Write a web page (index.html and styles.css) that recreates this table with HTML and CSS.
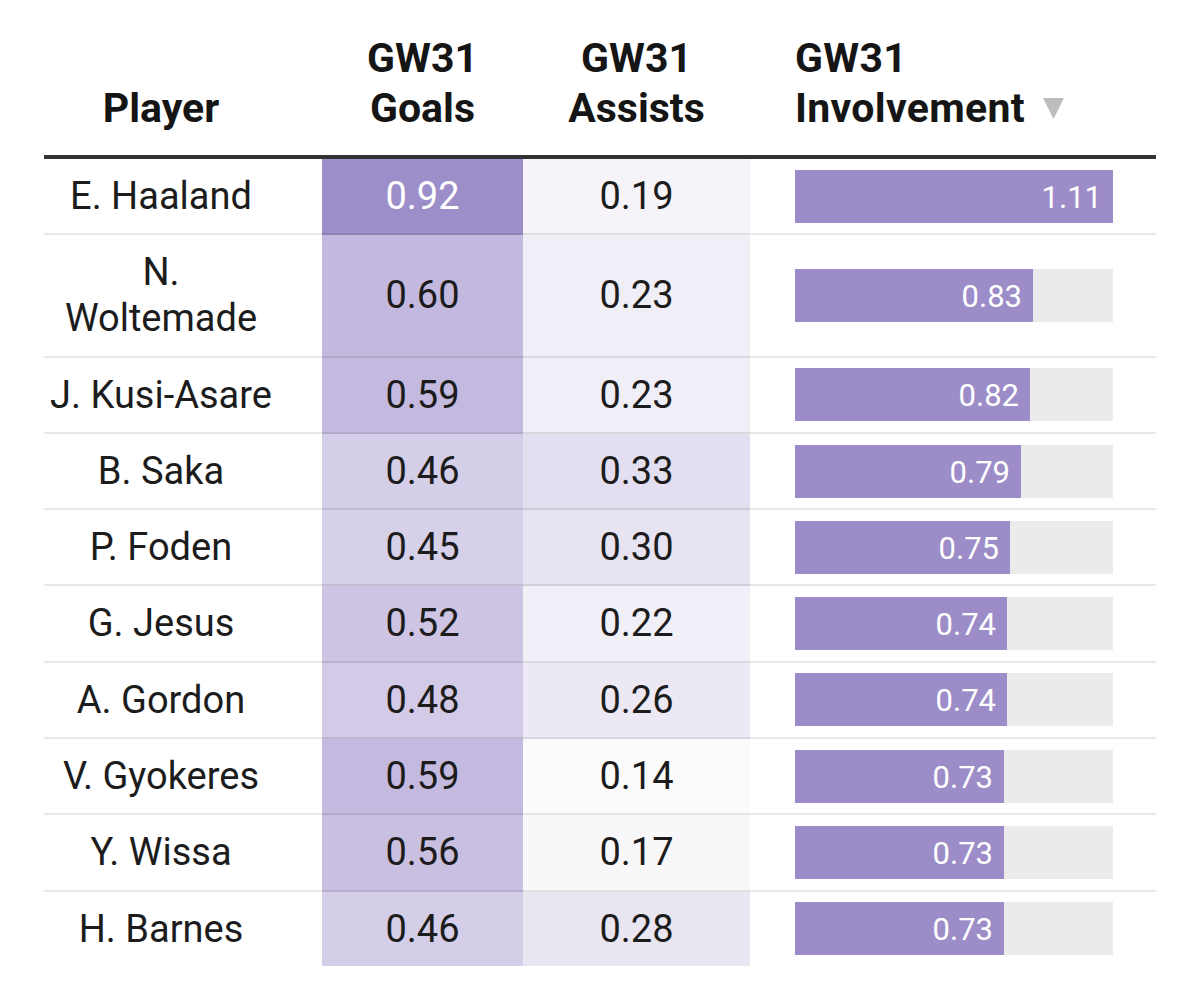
FILE: index.html
```html
<!DOCTYPE html>
<html lang="en">
<head>
<meta charset="utf-8">
<title>GW31 Involvement</title>
<link rel="stylesheet" href="styles.css">
</head>
<body>
<table class="stats">
  <colgroup>
    <col class="c-player">
    <col class="c-goals">
    <col class="c-assists">
    <col class="c-inv">
  </colgroup>
  <thead>
    <tr>
      <th class="col-player">Player</th>
      <th class="col-goals">GW31<br>Goals</th>
      <th class="col-assists">GW31<br>Assists</th>
      <th class="col-inv">GW31<br>Involvement<svg class="sort" width="21" height="21" viewBox="0 0 21 21"><polygon points="0,0 21,0 10.5,21" fill="#bdbdbd"/></svg></th>
    </tr>
  </thead>
  <tbody>
    <tr>
      <td class="player">E. Haaland</td>
      <td class="num light" style="background:#9c8ec8">0.92</td>
      <td class="num" style="background:#f6f4f9">0.19</td>
      <td class="inv"><div class="track"><div class="fill" style="width:318px">1.11</div></div></td>
    </tr>
    <tr>
      <td class="player">N. Woltemade</td>
      <td class="num" style="background:#c3b9de">0.60</td>
      <td class="num" style="background:#f0eef6">0.23</td>
      <td class="inv"><div class="track"><div class="fill" style="width:238px">0.83</div></div></td>
    </tr>
    <tr>
      <td class="player">J. Kusi-Asare</td>
      <td class="num" style="background:#c4badf">0.59</td>
      <td class="num" style="background:#f0eef6">0.23</td>
      <td class="inv"><div class="track"><div class="fill" style="width:235px">0.82</div></div></td>
    </tr>
    <tr>
      <td class="player">B. Saka</td>
      <td class="num" style="background:#d5cee8">0.46</td>
      <td class="num" style="background:#e4dff0">0.33</td>
      <td class="inv"><div class="track"><div class="fill" style="width:226px">0.79</div></div></td>
    </tr>
    <tr>
      <td class="player">P. Foden</td>
      <td class="num" style="background:#d6d0e8">0.45</td>
      <td class="num" style="background:#e7e3f1">0.30</td>
      <td class="inv"><div class="track"><div class="fill" style="width:215px">0.75</div></div></td>
    </tr>
    <tr>
      <td class="player">G. Jesus</td>
      <td class="num" style="background:#cdc5e3">0.52</td>
      <td class="num" style="background:#f1eff7">0.22</td>
      <td class="inv"><div class="track"><div class="fill" style="width:212px">0.74</div></div></td>
    </tr>
    <tr>
      <td class="player">A. Gordon</td>
      <td class="num" style="background:#d2cae6">0.48</td>
      <td class="num" style="background:#ece9f4">0.26</td>
      <td class="inv"><div class="track"><div class="fill" style="width:212px">0.74</div></div></td>
    </tr>
    <tr>
      <td class="player">V. Gyokeres</td>
      <td class="num" style="background:#c4badf">0.59</td>
      <td class="num" style="background:#fbfbfc">0.14</td>
      <td class="inv"><div class="track"><div class="fill" style="width:209px">0.73</div></div></td>
    </tr>
    <tr>
      <td class="player">Y. Wissa</td>
      <td class="num" style="background:#c8bfe1">0.56</td>
      <td class="num" style="background:#f8f8fa">0.17</td>
      <td class="inv"><div class="track"><div class="fill" style="width:209px">0.73</div></div></td>
    </tr>
    <tr>
      <td class="player">H. Barnes</td>
      <td class="num" style="background:#d5cee8">0.46</td>
      <td class="num" style="background:#e9e6f2">0.28</td>
      <td class="inv"><div class="track"><div class="fill" style="width:209px">0.73</div></div></td>
    </tr>
  </tbody>
</table>
</body>
</html>
```
FILE: styles.css
```css
html, body {
  margin: 0;
  padding: 0;
  background: #ffffff;
}

body {
  padding: 33px 0 0 44px;
  font-family: Roboto, "Liberation Sans", sans-serif;
  color: #1c1c1c;
}

.stats {
  width: 1112px;
  border-collapse: separate;
  border-spacing: 0;
  table-layout: fixed;
}

.c-player { width: 278px; }
.c-goals { width: 201px; }
.c-assists { width: 227px; }
.c-inv { width: 406px; }

.stats th,
.stats td {
  box-sizing: border-box;
}

.stats th {
  font-size: 41px;
  font-weight: 700;
  line-height: 50px;
  color: #151515;
  vertical-align: bottom;
  padding: 0 0 22px 0;
  border-bottom: 4px solid #333333;
  text-align: center;
  white-space: nowrap;
}

.stats th.col-player {
  padding-left: 2px;
  padding-right: 46px;
}

.stats th.col-inv {
  text-align: left;
  padding-left: 45px;
  letter-spacing: 0.3px;
}

.sort {
  display: inline-block;
  margin-left: 18px;
  vertical-align: 3px;
}

.stats td {
  font-size: 38px;
  line-height: 46px;
  padding: 14px 0 14.3px 0;
  border-bottom: 2px solid rgba(0, 0, 0, 0.09);
  text-align: center;
  vertical-align: middle;
}

.stats tbody tr:last-child td {
  border-bottom: none;
}

.stats td.player {
  padding-left: 2px;
  padding-right: 46px;
}

.stats td.num.light {
  color: #ffffff;
}

.stats td.inv {
  padding-left: 45px;
  padding-right: 43px;
  padding-top: 0;
  padding-bottom: 0;
}

.track {
  height: 53px;
  background: #ebebeb;
  display: flex;
}

.fill {
  height: 53px;
  background: #9c8dc8;
  color: #ffffff;
  font-size: 31px;
  line-height: 56px;
  text-align: right;
  padding-right: 11px;
  box-sizing: border-box;
}
```
